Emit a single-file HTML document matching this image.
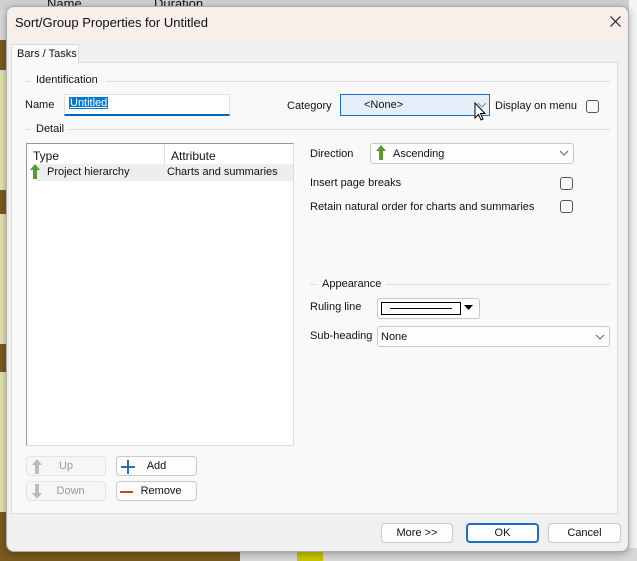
<!DOCTYPE html>
<html><head><style>
*{box-sizing:border-box}
body{margin:0;width:637px;height:561px;overflow:hidden;position:relative;background:#c8c8c8;font-family:"Segoe UI","Liberation Sans",sans-serif;font-size:11px;color:#111}
.a{position:absolute;white-space:nowrap}
.cb{position:absolute;width:13px;height:13px;border:1px solid #555;border-radius:3px;background:#fafafa}
.btn{position:absolute;background:#fdfdfd;border:1px solid #c9c9c9;border-radius:4px;text-align:center;line-height:19px;font-size:11px;white-space:nowrap}
.hl{position:absolute;height:1px;background:#d8dde6}
</style></head><body>
<div class="a" style="left:0;top:0;width:637px;height:561px;background:#d9d9d9"></div>
<div class="a" style="left:0;top:0;width:720px;height:10px;background:#d0d0d0"></div>
<div class="a" style="left:47px;top:-4px;font-size:13px">Name</div>
<div class="a" style="left:154px;top:-4px;font-size:13px">Duration</div>
<div class="a" style="left:0;top:40px;width:8px;height:30px;background:#7a5a1e"></div>
<div class="a" style="left:0;top:72px;width:8px;height:118px;background:#e2dfae"></div>
<div class="a" style="left:0;top:190px;width:8px;height:24px;background:#7a5a1e"></div>
<div class="a" style="left:0;top:214px;width:8px;height:130px;background:#e2dfae"></div>
<div class="a" style="left:0;top:344px;width:8px;height:28px;background:#7a5a1e"></div>
<div class="a" style="left:0;top:372px;width:8px;height:140px;background:#e2dfae"></div>
<div class="a" style="left:0;top:512px;width:8px;height:49px;background:#7a5a1e"></div>
<div class="a" style="left:629px;top:0;width:8px;height:561px;background:#f4f4f4"></div>
<div class="a" style="left:0;top:548px;width:637px;height:13px;background:#7a5a1e"></div>
<div class="a" style="left:240px;top:548px;width:397px;height:13px;background:#d8d8d8"></div>
<div class="a" style="left:297px;top:548px;width:26px;height:13px;background:#c8c400"></div>
<div class="a" style="left:6px;top:6px;width:623px;height:546px;background:#f0f0f0;border:1px solid #aaa;border-radius:8px;box-shadow:0 2px 8px rgba(0,0,0,.3);overflow:hidden">
 <div class="a" style="left:0;top:0;width:623px;height:34px;background:#f7efe9"></div>
 <div class="a" style="left:8px;top:8px;font-size:13px">Sort/Group Properties for Untitled</div>
 <svg class="a" style="left:603px;top:9px" width="11" height="11"><path d="M0.5 0.5L10.5 10.5M10.5 0.5L0.5 10.5" stroke="#222" stroke-width="1.2"/></svg>
 <div class="a" style="left:4px;top:55px;width:607px;height:452px;background:#f9f9f9;border:1px solid #dcdcdc"></div>
 <div class="a" style="left:4px;top:37px;width:68px;height:20px;background:#f9f9f9;border:1px solid #dcdcdc;border-bottom:none;padding:3px 0 0 5px">Bars / Tasks</div>
</div>
<div class="hl" style="left:25px;top:81px;width:6px"></div>
<div class="a" style="left:36px;top:74px">Identification</div>
<div class="hl" style="left:106px;top:81px;width:504px"></div>
<div class="a" style="left:25px;top:99px">Name</div>
<div class="a" style="left:64px;top:94px;width:166px;height:22px;background:#fff;border:1px solid #e0e0e0;border-bottom:2px solid #0067c0"></div>
<div class="a" style="left:69px;top:97px;background:#0078d7;color:#fff;padding:0 1px;text-decoration:underline">Untitled</div>
<div class="a" style="left:287px;top:100px">Category</div>
<div class="a" style="left:340px;top:94px;width:150px;height:22px;background:#e4effa;border:1px solid #1c6fc4"></div>
<div class="a" style="left:364px;top:99px">&lt;None&gt;</div>
<svg class="a" style="left:477px;top:102px" width="10" height="6"><path d="M1 1L5 5L9 1" stroke="#888" fill="none"/></svg>
<div class="a" style="left:495px;top:100px">Display on menu</div>
<div class="cb" style="left:586px;top:100px"></div>
<div class="hl" style="left:25px;top:129px;width:6px"></div>
<div class="a" style="left:36px;top:123px">Detail</div>
<div class="hl" style="left:68px;top:129px;width:542px"></div>
<div class="a" style="left:26px;top:143px;width:268px;height:303px;background:#fff;border:1px solid #999;border-right-color:#ddd;border-bottom-color:#ddd"></div>
<div class="a" style="left:164px;top:144px;width:1px;height:20px;background:#ddd"></div>
<div class="a" style="left:33px;top:149px;font-size:12px">Type</div>
<div class="a" style="left:171px;top:149px;font-size:12px">Attribute</div>
<div class="a" style="left:36px;top:164px;width:257px;height:17px;background:#eee"></div>
<svg class="a" style="left:29px;top:164px" width="12" height="16"><path d="M6 0 L11 6 L8 6 L8 15 L4 15 L4 6 L1 6Z" fill="#5a9a32"/></svg>
<div class="a" style="left:47px;top:166px">Project hierarchy</div>
<div class="a" style="left:167px;top:166px">Charts and summaries</div>
<div class="btn" style="left:26px;top:456px;width:80px;height:20px;color:#999;background:#f6f6f6;border-color:#e3e3e3"><svg class="a" style="left:4px;top:2px" width="12" height="16"><path d="M6 0 L11 6 L8 6 L8 15 L4 15 L4 6 L1 6Z" fill="#bbb"/></svg>Up</div>
<div class="btn" style="left:26px;top:481px;width:80px;height:20px;color:#999;background:#f6f6f6;border-color:#e3e3e3"><svg class="a" style="left:4px;top:2px" width="12" height="16"><path d="M6 15 L11 9 L8 9 L8 0 L4 0 L4 9 L1 9Z" fill="#bbb"/></svg>&nbsp;&nbsp;&nbsp;Down</div>
<div class="btn" style="left:116px;top:456px;width:81px;height:20px"><svg class="a" style="left:4px;top:3px" width="14" height="14"><path d="M7 0V14M0 7H14" stroke="#2e6db4" stroke-width="2"/></svg>Add</div>
<div class="btn" style="left:116px;top:481px;width:81px;height:20px">&nbsp;&nbsp;&nbsp;Remove<div class="a" style="left:3px;top:9px;width:13px;height:2px;background:#c8452d"></div></div>
<div class="a" style="left:310px;top:148px">Direction</div>
<div class="a" style="left:370px;top:143px;width:204px;height:21px;background:#fdfdfd;border:1px solid #c9c9c9;border-radius:3px"></div>
<svg class="a" style="left:375px;top:145px" width="12" height="16"><path d="M6 0 L11 6 L8 6 L8 15 L4 15 L4 6 L1 6Z" fill="#5a9a32"/></svg>
<div class="a" style="left:393px;top:148px">Ascending</div>
<svg class="a" style="left:559px;top:150px" width="10" height="6"><path d="M1 1L5 5L9 1" stroke="#666" fill="none"/></svg>
<div class="a" style="left:310px;top:177px">Insert page breaks</div>
<div class="cb" style="left:560px;top:177px"></div>
<div class="a" style="left:310px;top:201px">Retain natural order for charts and summaries</div>
<div class="cb" style="left:560px;top:200px"></div>
<div class="hl" style="left:310px;top:284px;width:6px"></div>
<div class="a" style="left:322px;top:278px">Appearance</div>
<div class="hl" style="left:386px;top:284px;width:224px"></div>
<div class="a" style="left:310px;top:301px">Ruling line</div>
<div class="a" style="left:377px;top:298px;width:103px;height:21px;background:#fdfdfd;border:1px solid #c9c9c9;border-radius:3px"></div>
<div class="a" style="left:381px;top:302px;width:80px;height:13px;border:1px solid #000"></div>
<div class="a" style="left:390px;top:308px;width:62px;height:1px;background:#000"></div>
<svg class="a" style="left:464px;top:305px" width="10" height="6"><path d="M0 0H9L4.5 5Z" fill="#000"/></svg>
<div class="a" style="left:310px;top:330px">Sub-heading</div>
<div class="a" style="left:377px;top:326px;width:233px;height:21px;background:#fdfdfd;border:1px solid #c9c9c9;border-radius:3px"></div>
<div class="a" style="left:381px;top:331px">None</div>
<svg class="a" style="left:595px;top:334px" width="10" height="6"><path d="M1 1L5 5L9 1" stroke="#666" fill="none"/></svg>
<div class="btn" style="left:381px;top:523px;width:72px;height:20px">More &gt;&gt;</div>
<div class="btn" style="left:466px;top:523px;width:73px;height:20px;border:2px solid #1c6fc4;line-height:16px">OK</div>
<div class="btn" style="left:548px;top:523px;width:73px;height:20px">Cancel</div>
<svg class="a" style="left:474px;top:102px" width="12" height="20"><path d="M1 1V16L4.5 12.5L7 18L9 17L6.5 11.5H11Z" fill="#fff" stroke="#000" stroke-width="1"/></svg>
</body></html>
